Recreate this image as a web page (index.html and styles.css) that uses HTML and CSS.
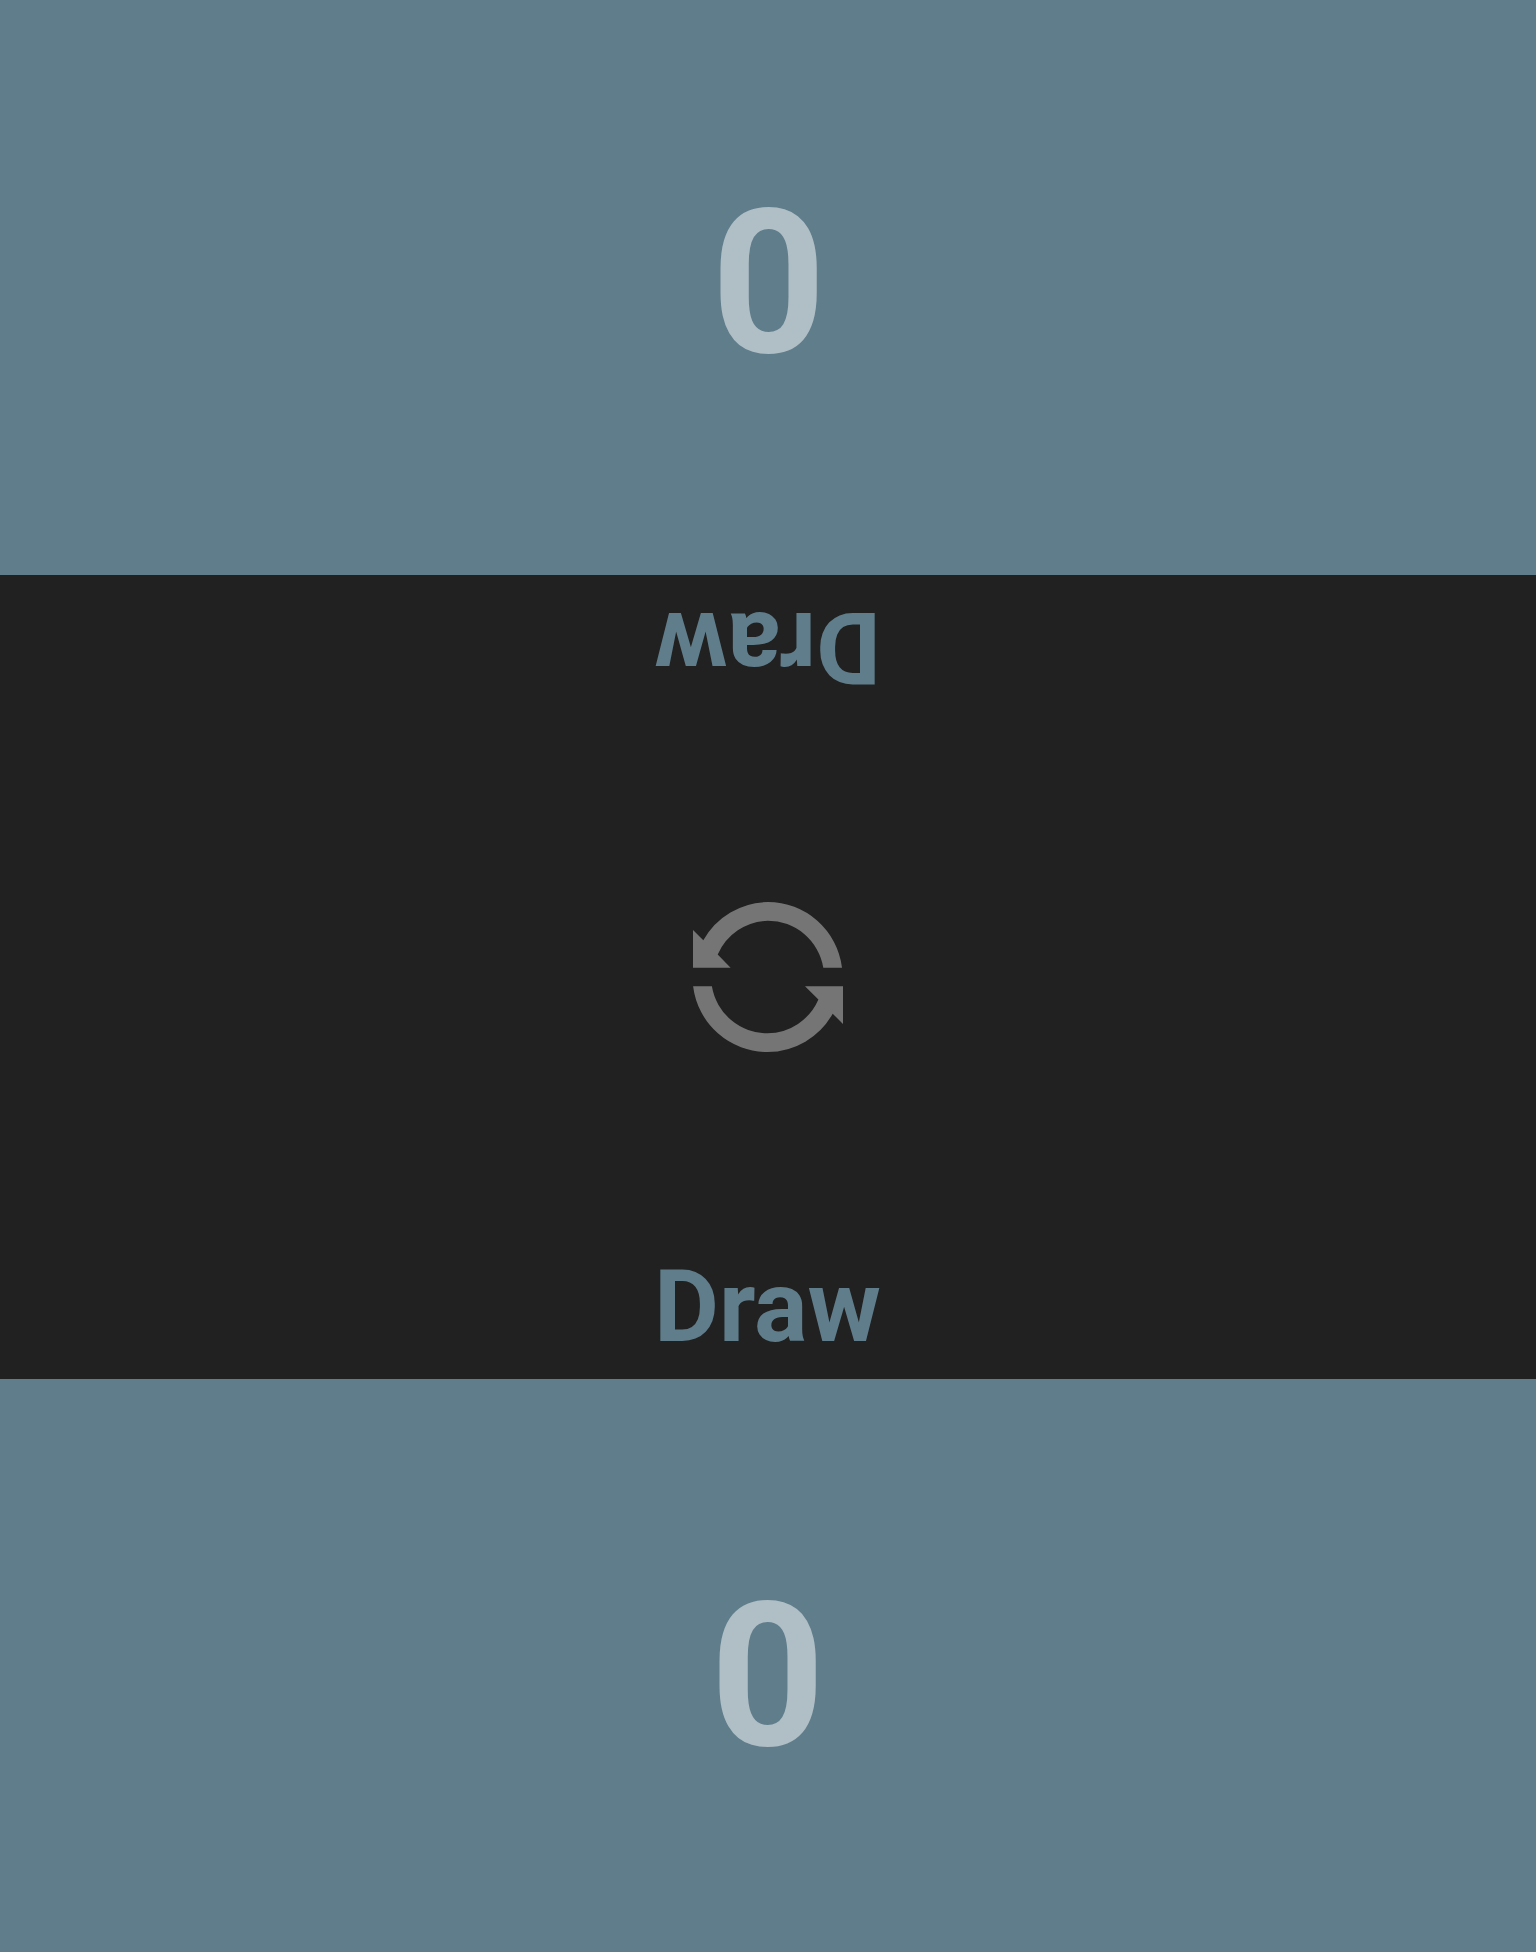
FILE: index.html
```html
<!DOCTYPE html>
<html lang="en">
<head>
<meta charset="utf-8">
<title>Score</title>
<link rel="stylesheet" href="styles.css">
</head>
<body>
<main class="board">
  <section class="player player-top flipped"><span class="score">0</span></section>
  <section class="middle">
    <div class="result result-top flipped">Draw</div>
    <button class="reset" aria-label="Reset">
      <svg width="150" height="150" viewBox="0 0 150 150" fill="currentColor">
        <path d="M0 28.1 10.3 38.2A74.8 74.8 0 0 1 74.8 0A74.8 74.8 0 0 1 149 65.7H130.3A56.2 56.2 0 0 0 74.8 18.7A56.2 56.2 0 0 0 24.7 52.6L37.6 65.7H0Z"/>
        <path d="M150 121.9 139.7 111.7A74.8 74.8 0 0 1 74.6 150A74.8 74.8 0 0 1 .1 84.3H18.9A56.2 56.2 0 0 0 74.6 131.3A56.2 56.2 0 0 0 125.4 97.5L112 84.3H150Z"/>
      </svg>
    </button>
    <div class="result">Draw</div>
  </section>
  <section class="player player-bottom"><span class="score">0</span></section>
</main>
</body>
</html>
```
FILE: styles.css
```css
body {
  margin: 0;
  font-family: Roboto, sans-serif;
  font-weight: 700;
}
.board {
  display: grid;
  grid-template-rows: 575px 804px 573px;
  height: 1952px;
}
.player {
  display: flex;
  align-items: center;
  justify-content: center;
  padding: 22px 1px 0 0;
  background: #607d8b;
  color: #b0bec5;
}
.player-top {
  padding-top: 21px;
}
.score {
  font-size: 200px;
  line-height: 234px;
}
.middle {
  display: flex;
  flex-direction: column;
  align-items: center;
  justify-content: space-between;
  background: #212121;
}
.result {
  color: #607d8b;
  font-size: 100px;
  line-height: 117px;
  padding: 0 1px 14px 0;
}
.result-top {
  margin-right: 3px;
}
.reset {
  display: flex;
  padding: 0;
  border: 0;
  background: none;
  color: #757575;
}
.flipped {
  transform: rotate(180deg);
}
```
